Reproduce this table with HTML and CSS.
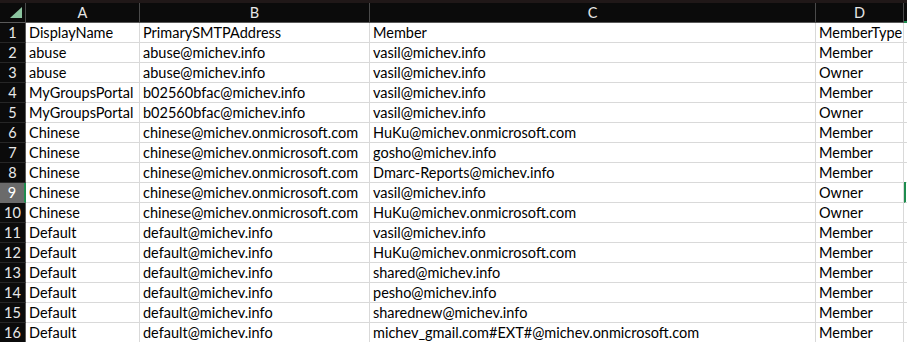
FILE: index.html
```html
<!DOCTYPE html>
<html lang="en">

<head>
    <meta charset="UTF-8">
    <title>Members</title>
    <link rel="stylesheet" href="styles.css">
</head>

<body>
    <div class="topbar"></div>
    <div class="sheet">
        <div class="row head">
            <div class="corner"><span class="tri"></span></div>
            <div class="col">A</div>
            <div class="col">B</div>
            <div class="col">C</div>
            <div class="col">D</div>
            <div class="col e"></div>
        </div>
        <div class="row"><div class="num">1</div><div class="cell">DisplayName</div><div class="cell">PrimarySMTPAddress</div><div class="cell">Member</div><div class="cell">MemberType</div><div class="cell e"></div></div>
        <div class="row"><div class="num">2</div><div class="cell">abuse</div><div class="cell">abuse@michev.info</div><div class="cell">vasil@michev.info</div><div class="cell">Member</div><div class="cell e"></div></div>
        <div class="row"><div class="num">3</div><div class="cell">abuse</div><div class="cell">abuse@michev.info</div><div class="cell">vasil@michev.info</div><div class="cell">Owner</div><div class="cell e"></div></div>
        <div class="row"><div class="num">4</div><div class="cell">MyGroupsPortal</div><div class="cell">b02560bfac@michev.info</div><div class="cell">vasil@michev.info</div><div class="cell">Member</div><div class="cell e"></div></div>
        <div class="row"><div class="num">5</div><div class="cell">MyGroupsPortal</div><div class="cell">b02560bfac@michev.info</div><div class="cell">vasil@michev.info</div><div class="cell">Owner</div><div class="cell e"></div></div>
        <div class="row"><div class="num">6</div><div class="cell">Chinese</div><div class="cell">chinese@michev.onmicrosoft.com</div><div class="cell">HuKu@michev.onmicrosoft.com</div><div class="cell">Member</div><div class="cell e"></div></div>
        <div class="row"><div class="num">7</div><div class="cell">Chinese</div><div class="cell">chinese@michev.onmicrosoft.com</div><div class="cell">gosho@michev.info</div><div class="cell">Member</div><div class="cell e"></div></div>
        <div class="row"><div class="num">8</div><div class="cell">Chinese</div><div class="cell">chinese@michev.onmicrosoft.com</div><div class="cell">Dmarc-Reports@michev.info</div><div class="cell">Member</div><div class="cell e"></div></div>
        <div class="row"><div class="num active">9</div><div class="cell">Chinese</div><div class="cell">chinese@michev.onmicrosoft.com</div><div class="cell">vasil@michev.info</div><div class="cell">Owner</div><div class="cell e active"></div></div>
        <div class="row"><div class="num">10</div><div class="cell">Chinese</div><div class="cell">chinese@michev.onmicrosoft.com</div><div class="cell">HuKu@michev.onmicrosoft.com</div><div class="cell">Owner</div><div class="cell e"></div></div>
        <div class="row"><div class="num">11</div><div class="cell">Default</div><div class="cell">default@michev.info</div><div class="cell">vasil@michev.info</div><div class="cell">Member</div><div class="cell e"></div></div>
        <div class="row"><div class="num">12</div><div class="cell">Default</div><div class="cell">default@michev.info</div><div class="cell">HuKu@michev.onmicrosoft.com</div><div class="cell">Member</div><div class="cell e"></div></div>
        <div class="row"><div class="num">13</div><div class="cell">Default</div><div class="cell">default@michev.info</div><div class="cell">shared@michev.info</div><div class="cell">Member</div><div class="cell e"></div></div>
        <div class="row"><div class="num">14</div><div class="cell">Default</div><div class="cell">default@michev.info</div><div class="cell">pesho@michev.info</div><div class="cell">Member</div><div class="cell e"></div></div>
        <div class="row"><div class="num">15</div><div class="cell">Default</div><div class="cell">default@michev.info</div><div class="cell">sharednew@michev.info</div><div class="cell">Member</div><div class="cell e"></div></div>
        <div class="row"><div class="num">16</div><div class="cell">Default</div><div class="cell">default@michev.info</div><div class="cell">michev_gmail.com#EXT#@michev.onmicrosoft.com</div><div class="cell">Member</div><div class="cell e"></div></div>
    </div>
</body>

</html>
```

FILE: styles.css
```css
* {
    margin: 0;
    padding: 0;
    box-sizing: border-box;
}

body {
    font-family: Lato, "Liberation Sans", sans-serif;
    font-size: 14.5px;
    background: #fff;
    overflow: hidden;
}

.topbar {
    height: 3px;
    background: #201818;
}

.row {
    display: grid;
    grid-template-columns: 26px 114px 230px 446px 88px 1fr;
    height: 20px;
}

.head {
    background: #0b0b0b;
    color: #e6e6e6;
}

.head > div {
    border-right: 1px solid #4a4a4a;
    border-bottom: 1px solid #5a5a5a;
    text-align: center;
    line-height: 19px;
}

.head .e {
    border-right: none;
    border-bottom: 2px solid #1e8c4e;
}

.corner {
    position: relative;
}

.corner .tri {
    position: absolute;
    right: 3px;
    bottom: 4px;
    width: 0;
    height: 0;
    border-left: 12px solid transparent;
    border-bottom: 11px solid #8cc5a0;
}

.num {
    background: #0b0b0b;
    color: #e8e8e8;
    text-align: center;
    line-height: 19px;
    border-right: 1px solid #5a5a5a;
    border-bottom: 1px solid #262626;
}

.num.active {
    background: #6b6b6b;
    color: #fff;
    border-right: 2px solid #1e8c4e;
    border-bottom-color: #6b6b6b;
}

.cell {
    color: #000;
    padding-left: 3px;
    line-height: 20px;
    white-space: nowrap;
    overflow: hidden;
    border-right: 1px solid #d9d9d9;
    border-bottom: 1px solid #d9d9d9;
}

.cell.e {
    border-right: none;
}

.cell.e.active {
    border-left: 2px solid #1e8c4e;
    margin-top: -1px;
}
```
